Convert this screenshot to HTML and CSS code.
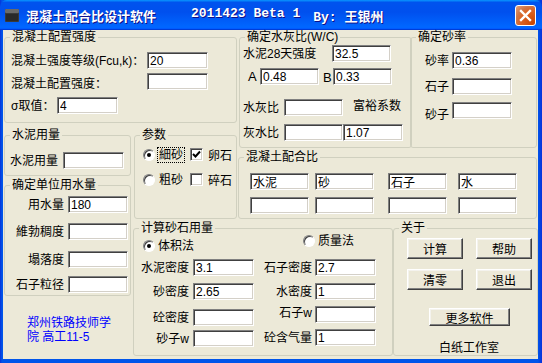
FILE: index.html
```html
<!DOCTYPE html>
<html lang="zh-CN">
<head>
  <meta charset="UTF-8" />
  <title>混凝土配合比设计软件</title>
  <link rel="stylesheet" href="styles.css">
</head>
<body>

  <div class="window">
    <div class="titlebar">
      <svg class="app-icon" width="16" height="16" viewBox="0 0 16 16">
        <rect x="1" y="2" width="14" height="13" rx="1" fill="#3a3a3a"/>
        <rect x="1" y="2" width="14" height="4" rx="1" fill="#6a6a6a"/>
        <rect x="2" y="7" width="12" height="7" fill="#2a2a2a"/>
      </svg>
      <span class="title">
        <span>混凝土配合比设计软件</span><span class="t-ver">2011423 Beta 1</span><span class="t-by">By: 王银州</span>
      </span>
      <button class="close">
        <svg width="13" height="13" viewBox="0 0 13 13">
          <path d="M2 2 L11 11 M11 2 L2 11" stroke="#fff" stroke-width="2.4" stroke-linecap="square"/>
        </svg>
      </button>
    </div>

    <div class="client">

      <!-- 混凝土配置强度 -->
      <div class="group g-strength">
        <span class="group-title">混凝土配置强度</span>
        <div class="row">
          <label class="lbl w136">混凝土强度等级(Fcu,k)：</label>
          <input class="field w61" value="20">
        </div>
        <div class="row mt4">
          <label class="lbl w136 low">混凝土配置强度：</label>
          <input class="field w61" value="">
        </div>
        <div class="row mt7">
          <label class="lbl w46">σ取值：</label>
          <input class="field w61" value="4">
        </div>
      </div>

      <!-- 确定水灰比 -->
      <div class="group g-wc">
        <span class="group-title">确定水灰比(W/C)</span>
        <div class="row">
          <label class="lbl w89">水泥28天强度</label>
          <input class="field" value="32.5">
        </div>
        <div class="row mt6">
          <label class="lbl lbl-a">A</label>
          <input class="field" value="0.48">
          <label class="lbl lbl-b">B</label>
          <input class="field" value="0.33">
        </div>
        <div class="row mt14">
          <label class="lbl w41">水灰比</label>
          <input class="field" value="">
          <label class="lbl spare">富裕系数</label>
        </div>
        <div class="row mt8">
          <label class="lbl w41">灰水比</label>
          <input class="field" value="">
          <input class="field w60 ml5" value="1.07">
        </div>
      </div>

      <!-- 确定砂率 -->
      <div class="group g-sand">
        <span class="group-title">确定砂率</span>
        <div class="row">
          <label class="lbl w27">砂率</label>
          <input class="field w60" value="0.36">
        </div>
        <div class="row mt9">
          <label class="lbl w27">石子</label>
          <input class="field w60" value="">
        </div>
        <div class="row mt7">
          <label class="lbl w27 low8">砂子</label>
          <input class="field w60" value="">
        </div>
      </div>

      <!-- 水泥用量 -->
      <div class="group g-cement">
        <span class="group-title">水泥用量</span>
        <div class="row">
          <label class="lbl w53">水泥用量</label>
          <input class="field w61" value="">
        </div>
      </div>

      <!-- 参数 -->
      <div class="group g-param">
        <span class="group-title">参数</span>
        <div class="row">
          <span class="radio checked"></span>
          <span class="opt focus">細砂</span>
          <span class="check checked">
            <svg width="9" height="9" viewBox="0 0 9 9"><path d="M1 4 L3.5 6.5 L8 1.5" fill="none" stroke="#000" stroke-width="2"/></svg>
          </span>
          <span class="opt-text">卵石</span>
        </div>
        <div class="row mt8">
          <span class="radio"></span>
          <span class="opt">粗砂</span>
          <span class="check"></span>
          <span class="opt-text">碎石</span>
        </div>
      </div>

      <!-- 混凝土配合比 -->
      <div class="group g-mix">
        <span class="group-title">混凝土配合比</span>
        <div class="mix-grid">
          <input class="field" value="水泥">
          <input class="field" value="砂">
          <input class="field" value="石子">
          <input class="field" value="水">
          <input class="field" value="">
          <input class="field" value="">
          <input class="field" value="">
          <input class="field" value="">
        </div>
      </div>

      <!-- 确定单位用水量 -->
      <div class="group g-water">
        <span class="group-title">确定单位用水量</span>
        <div class="row">
          <label class="lbl w59 right">用水量</label>
          <input class="field w60" value="180">
        </div>
        <div class="row mt10">
          <label class="lbl w59 right">維勃稠度</label>
          <input class="field w60" value="">
        </div>
        <div class="row mt11">
          <label class="lbl w59 right">塌落度</label>
          <input class="field w60" value="">
        </div>
        <div class="row mt8">
          <label class="lbl w59 right">石子粒径</label>
          <input class="field w60" value="">
        </div>
      </div>

      <!-- 计算砂石用量 -->
      <div class="group g-calc">
        <span class="group-title">计算砂石用量</span>
        <div class="method-row">
          <div class="method low5"><span class="radio checked"></span><span>体积法</span></div>
          <div class="method mass"><span class="radio"></span><span>质量法</span></div>
        </div>
        <div class="calc-cols">
          <div class="calc-col">
            <div class="row">
              <label class="lbl w55 right">水泥密度</label>
              <input class="field w61" value="3.1">
            </div>
            <div class="row mt7">
              <label class="lbl w55 right">砂密度</label>
              <input class="field w61" value="2.65">
            </div>
            <div class="row mt9">
              <label class="lbl w55 right">砼密度</label>
              <input class="field w61" value="">
            </div>
            <div class="row mt4">
              <label class="lbl w55 right">砂子w</label>
              <input class="field w61" value="">
            </div>
          </div>
          <div class="calc-col">
            <div class="row">
              <label class="lbl w61 right">石子密度</label>
              <input class="field w61" value="2.7">
            </div>
            <div class="row mt7">
              <label class="lbl w61 right">水密度</label>
              <input class="field w61" value="1">
            </div>
            <div class="row mt6">
              <label class="lbl w61 right high">石子w</label>
              <input class="field w61" value="">
            </div>
            <div class="row mt6">
              <label class="lbl w61 right">砼含气量</label>
              <input class="field w61" value="1">
            </div>
          </div>
        </div>
      </div>

      <!-- 关于 -->
      <div class="group g-about">
        <span class="group-title">关于</span>
        <div class="btn-grid">
          <button class="btn">计算</button>
          <button class="btn">帮助</button>
          <button class="btn">清零</button>
          <button class="btn">退出</button>
        </div>
        <button class="btn btn-more">更多软件</button>
        <div class="studio">白纸工作室</div>
      </div>

      <div class="credit">郑州铁路技师学院 高工11-5</div>

    </div>
  </div>

</body>
</html>
```

FILE: styles.css
```css
body {
  margin: 0;
  background: #fff;
  font-family: "Liberation Sans", "Noto Sans CJK SC", sans-serif;
  font-size: 12px;
  color: #000;
}
.window {
  width: 542px;
  height: 363px;
  box-sizing: border-box;
  background: linear-gradient(90deg, #0831d9 0, #0055ea 2px, #0055ea 538px, #0831d9 542px);
  display: flex;
  flex-direction: column;
}
.titlebar {
  height: 30px;
  flex: none;
  display: flex;
  align-items: center;
  background: linear-gradient(#0997ff 0%, #0053ee 8%, #0050ee 40%, #0066ff 88%, #0066ff 93%, #005bff 95%, #003dd7 96%, #003dd7 100%);
  border-radius: 7px 7px 0 0;
  color: #fff;
}
.app-icon {
  margin: 0 6px 0 4px;
}
.title {
  font-family: "Liberation Mono", "Noto Sans CJK SC", monospace;
  font-weight: bold;
  font-size: 13px;
  white-space: pre;
  text-shadow: 1px 1px #0f1089;
  flex: 1;
  display: flex;
}
.t-ver { margin-left: 35px; }
.t-by { margin-left: 13px; }
.close {
  width: 21px;
  height: 21px;
  margin-right: 6px;
  padding: 0;
  border: 1px solid #fff;
  border-radius: 3px;
  background: radial-gradient(circle at 90% 90%, #cc4600 0%, #dc6527 55%, #cd7546 70%, #e5a17d 100%);
  display: flex;
  align-items: center;
  justify-content: center;
}

.client {
  flex: 1;
  margin: 0 4px 4px 3px;
  background: #ece9d8;
  padding: 7px 0 0 1px;
  display: grid;
  grid-template-columns: 129px 105px 155px 17px 127px;
  grid-template-rows: 98px 22px 28px 43px 86px 42px;
}

/* group boxes */
.group {
  position: relative;
  box-sizing: border-box;
  border: 1px solid #d0d0bf;
  border-radius: 3px;
  align-self: start;
  justify-self: start;
}
.group-title {
  position: absolute;
  top: -8px;
  left: 5px;
  padding: 0 2px;
  background: #ece9d8;
  line-height: 14px;
  white-space: nowrap;
}
.g-strength { grid-column: 1 / 3; grid-row: 1; width: 233px; height: 86px; padding: 14px 0 0 6px; }
.g-wc { grid-column: 3 / 5; grid-row: 1 / 3; margin-left: 1px; width: 173px; height: 111px; padding: 7px 0 0 3px; }
.g-sand { grid-column: 5; grid-row: 1 / 3; width: 127px; height: 111px; padding: 14px 0 0 14px; }
.g-cement { grid-column: 1; grid-row: 2 / 4; width: 127px; height: 41px; padding: 16px 0 0 5px; }
.g-param { grid-column: 2; grid-row: 2 / 5; margin-left: 1px; width: 103px; height: 84px; padding: 10px 0 0 8px; }
.g-mix { grid-column: 3 / 6; grid-row: 3 / 5; width: 299px; height: 62px; padding: 15px 0 0 11px; }
.g-water { grid-column: 1; grid-row: 4 / 6; width: 127px; height: 111px; padding: 10px 0 0 0; }
.g-calc { grid-column: 2 / 4; grid-row: 5 / 7; width: 260px; height: 128px; padding: 4px 0 0 9px; }
.g-about { grid-column: 4 / 6; grid-row: 5 / 7; width: 145px; height: 128px; padding: 9px 0 0 13px; }

.row {
  display: flex;
  align-items: center;
  height: 17px;
}
.mt4 { margin-top: 4px; }
.mt6 { margin-top: 6px; }
.mt7 { margin-top: 7px; }
.mt8 { margin-top: 8px; }
.mt9 { margin-top: 9px; }
.mt10 { margin-top: 10px; }
.mt11 { margin-top: 11px; }
.mt14 { margin-top: 14px; }
.ml5 { margin-left: 5px; }

.lbl {
  flex: none;
  white-space: nowrap;
  line-height: 14px;
}
.lbl.right { text-align: right; margin-right: 4px; }
.low { margin-top: 5px; }
.low8 { margin-top: 8px; }
.high { margin-bottom: 3px; }
.w27 { width: 27px; }
.w41 { width: 41px; }
.w46 { width: 46px; }
.w53 { width: 53px; }
.w55 { width: 55px; }
.w59 { width: 55px; padding-left: 4px; }
.w61.lbl { width: 58px; margin-right: 3px; }
.w89 { width: 89px; }
.w136 { width: 136px; }
.lbl-a { width: 12px; padding-left: 5px; font-size: 13px; }
.lbl-b { width: 10px; padding-left: 4px; font-size: 13px; margin-top: 2px; }
.spare { margin-left: 10px; margin-top: -4px; }

.field {
  flex: none;
  width: 59px;
  height: 17px;
  box-sizing: border-box;
  margin: 0;
  padding: 0 0 0 2px;
  background: #fff;
  border: 1px solid;
  border-color: #808080 #fff #fff #808080;
  box-shadow: inset 1px 1px #404040, inset -1px -1px #d4d0c8;
  font: 12px "Liberation Sans", "Noto Sans CJK SC", sans-serif;
  color: #000;
  outline: none;
}
.field.w60 { width: 60px; }
.field.w61 { width: 61px; }

/* radio / checkbox */
.radio {
  flex: none;
  position: relative;
  width: 12px;
  height: 12px;
  box-sizing: border-box;
  border-radius: 50%;
  background: #fff;
  border: 1px solid;
  border-color: #808080 #fff #fff #808080;
  box-shadow: inset 1px 1px #404040;
}
.radio.checked::after {
  content: "";
  position: absolute;
  left: 3px;
  top: 3px;
  width: 4px;
  height: 4px;
  border-radius: 50%;
  background: #000;
}
.opt {
  margin-left: 2px;
  padding: 0 1px;
  line-height: 14px;
  border: 1px dotted transparent;
}
.opt.focus { border-color: #000; }
.check {
  flex: none;
  width: 13px;
  height: 13px;
  box-sizing: border-box;
  margin-left: 5px;
  background: #fff;
  border: 1px solid;
  border-color: #808080 #fff #fff #808080;
  box-shadow: inset 1px 1px #404040, inset -1px -1px #d4d0c8;
  display: flex;
  align-items: center;
  justify-content: center;
}
.opt-text { margin-left: 5px; }

.mix-grid {
  display: grid;
  grid-template-columns: 65px 73px 70px 59px;
  row-gap: 7px;
}

.method-row {
  display: flex;
  align-items: flex-start;
  height: 19px;
  margin-top: 1px;
}
.method {
  display: flex;
  align-items: center;
  gap: 3px;
  line-height: 14px;
}
.low5 { margin-top: 5px; }
.mass { margin-left: 109px; }
.calc-cols {
  display: flex;
  margin: 6px 0 0 -9px;
}
.calc-col {
  display: flex;
  flex-direction: column;
}

.btn-grid {
  display: grid;
  grid-template-columns: 56px 56px;
  grid-template-rows: 21px 21px;
  column-gap: 13px;
  row-gap: 10px;
}
.btn {
  margin: 0;
  padding: 0;
  background: #ece9d8;
  border: 1px solid;
  border-color: #fff #404040 #404040 #fff;
  box-shadow: inset -1px -1px #808080, inset 1px 1px #f4f3ee;
  font: 12px "Liberation Sans", "Noto Sans CJK SC", sans-serif;
  color: #000;
}
.btn-more {
  display: block;
  width: 81px;
  height: 18px;
  margin: 18px 0 0 22px;
}
.studio {
  margin: 15px 0 0 32px;
  line-height: 14px;
}

.credit {
  grid-column: 1;
  grid-row: 6;
  width: 86px;
  padding: 2px 0 0 23px;
  color: #0000ff;
  line-height: 14px;
}
```
